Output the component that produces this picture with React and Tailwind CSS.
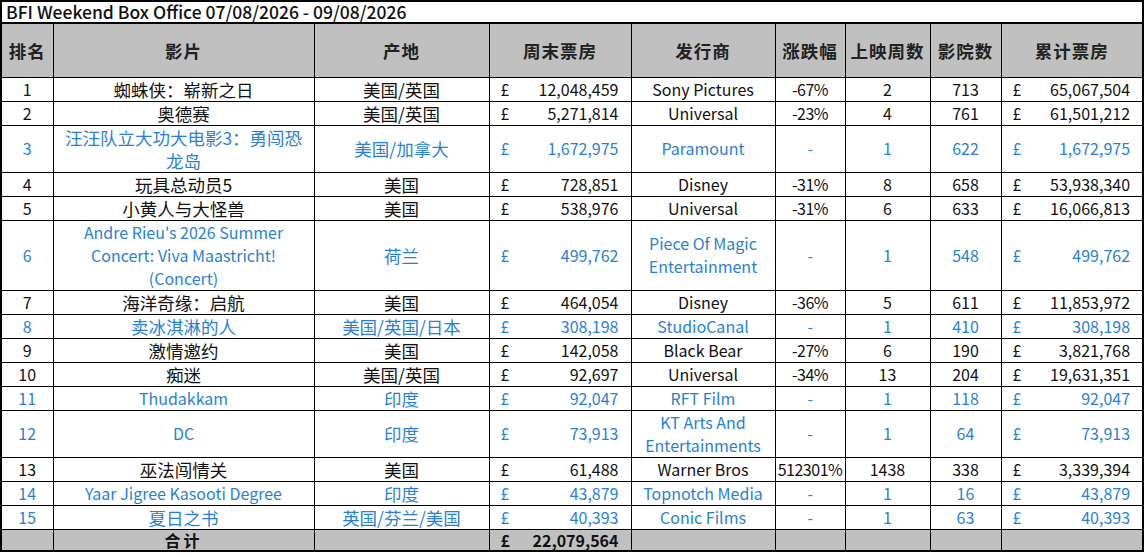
import React from "react";

const rows = [
  { rank: 1, title: "蜘蛛侠：崭新之日", origin: "美国/英国", weekend: "12,048,459", dist: "Sony Pictures", change: "-67%", weeks: "2", cinemas: "713", total: "65,067,504" },
  { rank: 2, title: "奥德赛", origin: "美国/英国", weekend: "5,271,814", dist: "Universal", change: "-23%", weeks: "4", cinemas: "761", total: "61,501,212" },
  { rank: 3, title: ["汪汪队立大功大电影3：勇闯恐", "龙岛"], origin: "美国/加拿大", weekend: "1,672,975", dist: "Paramount", change: "-", weeks: "1", cinemas: "622", total: "1,672,975", isNew: true, h: "h-[46px]" },
  { rank: 4, title: "玩具总动员5", origin: "美国", weekend: "728,851", dist: "Disney", change: "-31%", weeks: "8", cinemas: "658", total: "53,938,340" },
  { rank: 5, title: "小黄人与大怪兽", origin: "美国", weekend: "538,976", dist: "Universal", change: "-31%", weeks: "6", cinemas: "633", total: "16,066,813" },
  { rank: 6, title: ["Andre Rieu's 2026 Summer", "Concert: Viva Maastricht!", "(Concert)"], latin: true, origin: "荷兰", weekend: "499,762", dist: ["Piece Of Magic", "Entertainment"], change: "-", weeks: "1", cinemas: "548", total: "499,762", isNew: true, h: "h-[68px]" },
  { rank: 7, title: "海洋奇缘：启航", origin: "美国", weekend: "464,054", dist: "Disney", change: "-36%", weeks: "5", cinemas: "611", total: "11,853,972" },
  { rank: 8, title: "卖冰淇淋的人", origin: "美国/英国/日本", weekend: "308,198", dist: "StudioCanal", change: "-", weeks: "1", cinemas: "410", total: "308,198", isNew: true },
  { rank: 9, title: "激情邀约", origin: "美国", weekend: "142,058", dist: "Black Bear", change: "-27%", weeks: "6", cinemas: "190", total: "3,821,768" },
  { rank: 10, title: "痴迷", origin: "美国/英国", weekend: "92,697", dist: "Universal", change: "-34%", weeks: "13", cinemas: "204", total: "19,631,351" },
  { rank: 11, title: "Thudakkam", latin: true, origin: "印度", weekend: "92,047", dist: "RFT Film", change: "-", weeks: "1", cinemas: "118", total: "92,047", isNew: true },
  { rank: 12, title: "DC", latin: true, origin: "印度", weekend: "73,913", dist: ["KT Arts And", "Entertainments"], change: "-", weeks: "1", cinemas: "64", total: "73,913", isNew: true, h: "h-[46px]" },
  { rank: 13, title: "巫法闯情关", origin: "美国", weekend: "61,488", dist: "Warner Bros", change: "512301%", weeks: "1438", cinemas: "338", total: "3,339,394" },
  { rank: 14, title: "Yaar Jigree Kasooti Degree", latin: true, origin: "印度", weekend: "43,879", dist: "Topnotch Media", change: "-", weeks: "1", cinemas: "16", total: "43,879", isNew: true },
  { rank: 15, title: "夏日之书", origin: "英国/芬兰/美国", weekend: "40,393", dist: "Conic Films", change: "-", weeks: "1", cinemas: "63", total: "40,393", isNew: true },
];

const headers = ["排名", "影片", "产地", "周末票房", "发行商", "涨跌幅", "上映周数", "影院数", "累计票房"];

function Lines({ value }) {
  if (!Array.isArray(value)) return value;
  return value.map((line, i) => (
    <span key={i} className="block">{line}</span>
  ));
}

function Money({ value, bold }) {
  return (
    <div className={`flex items-center justify-between pl-[11px] pr-[12px] ${bold ? "font-bold" : ""}`}>
      <span>£</span>
      <span>{value}</span>
    </div>
  );
}

export default function App() {
  const cell = "border border-black p-0 text-center align-middle";
  return (
    <div className="w-[1145px] h-[554px] bg-white overflow-hidden font-['Noto_Sans_CJK_SC','Noto_Sans',sans-serif] text-[16px] leading-[23px] text-[#111]">
      <table className="table-fixed border-collapse border-2 border-black w-[1142px]">
        <colgroup>
          <col className="w-[52px]" />
          <col className="w-[261px]" />
          <col className="w-[175px]" />
          <col className="w-[142px]" />
          <col className="w-[144px]" />
          <col className="w-[70px]" />
          <col className="w-[85px]" />
          <col className="w-[71px]" />
          <col className="w-[142px]" />
        </colgroup>
        <tbody>
          <tr>
            <td colSpan={9} className="h-[21px] border-x-2 border-b-2 border-black px-[4px] text-left font-medium text-[17.5px] leading-[20px]">
              BFI Weekend Box Office 07/08/2026 - 09/08/2026
            </td>
          </tr>
          <tr className="bg-[#c0c0c0]">
            {headers.map((h) => (
              <td key={h} className={`${cell} h-[54px] font-bold text-[17.5px] text-[#222] tracking-[1px]`}>
                {h}
              </td>
            ))}
          </tr>
          {rows.map((r) => (
            <tr key={r.rank} className={r.isNew ? "text-[#2a7fd4]" : ""}>
              <td className={`${cell} ${r.h || "h-[24px]"}`}>{r.rank}</td>
              <td className={`${cell} px-[2px] ${r.latin ? "" : "text-[17.5px]"}`}><Lines value={r.title} /></td>
              <td className={`${cell} text-[17.5px]`}>{r.origin}</td>
              <td className={cell}><Money value={r.weekend} /></td>
              <td className={cell}><Lines value={r.dist} /></td>
              <td className={`${cell} tracking-[-0.5px]`}>{r.change}</td>
              <td className={cell}>{r.weeks}</td>
              <td className={cell}>{r.cinemas}</td>
              <td className={cell}><Money value={r.total} /></td>
            </tr>
          ))}
          <tr className="bg-[#c0c0c0] text-[#111]">
            <td className={`${cell} h-[22px]`}></td>
            <td className={`${cell} font-bold text-[16px] leading-[20px] tracking-[3px]`}>合计</td>
            <td className={cell}></td>
            <td className={`${cell} leading-[20px]`}><Money value="22,079,564" bold /></td>
            <td className={cell}></td>
            <td className={cell}></td>
            <td className={cell}></td>
            <td className={cell}></td>
            <td className={cell}></td>
          </tr>
        </tbody>
      </table>
    </div>
  );
}
